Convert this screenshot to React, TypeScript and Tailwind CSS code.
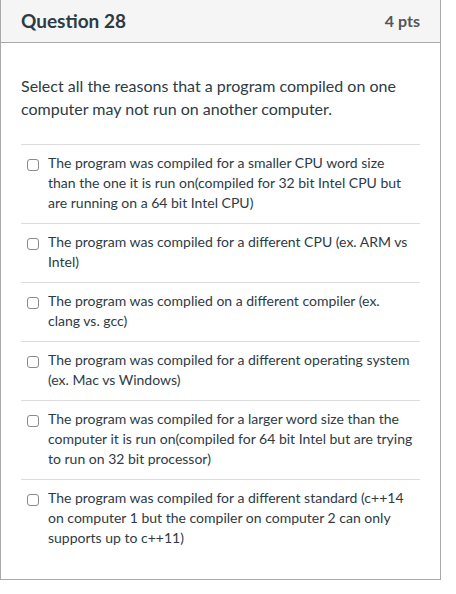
import React from "react";

const options = [
  "The program was compiled for a smaller CPU word size than the one it is run on(compiled for 32 bit Intel CPU but are running on a 64 bit Intel CPU)",
  "The program was compiled for a different CPU (ex. ARM vs Intel)",
  "The program was complied on a different compiler (ex. clang vs. gcc)",
  "The program was compiled for a different operating system (ex. Mac vs Windows)",
  "The program was compiled for a larger word size than the computer it is run on(compiled for 64 bit Intel but are trying to run on 32 bit processor)",
  "The program was compiled for a different standard (c++14 on computer 1 but the compiler on computer 2 can only supports up to c++11)",
];

export default function App() {
  return (
    <div className="w-[456px] h-[594px] bg-white" style={{ fontFamily: "Lato, 'Open Sans', sans-serif" }}>
      <div className="w-[441px] h-[580px] border border-t-0 border-[#a9a9a9] flex flex-col">
        <div className="h-[43px] bg-[#f5f5f5] border-b border-[#a9a9a9] px-[20px] flex items-center justify-between">
          <span className="text-[19px] font-bold text-[#2d3b45]">Question 28</span>
          <span className="text-[16px] font-bold text-[#555555]">4 pts</span>
        </div>
        <div className="px-[20px] pt-[31px]">
          <p className="text-[16px] leading-[23px] text-[#2d3b45]">
            Select all the reasons that a program compiled on one computer may not run on another computer.
          </p>
          <div className="mt-[24px]">
            {options.map((o, i) => (
              <div key={i} className="border-t border-[#dcdcdc] pt-[8px] pb-[10px] flex">
                <div className="w-[27px] shrink-0 pl-[6px] pt-[6px]">
                  <div className="w-[12px] h-[12px] rounded-[3px] border border-[#8a8a8a] bg-white" />
                </div>
                <div className="w-[366px] text-[14px] leading-[20px] text-[#2d3b45]">{o}</div>
              </div>
            ))}
          </div>
        </div>
      </div>
    </div>
  );
}
